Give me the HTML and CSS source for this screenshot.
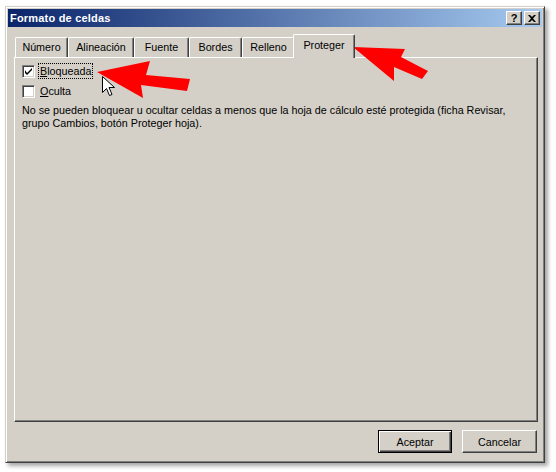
FILE: index.html
```html
<!DOCTYPE html>
<html lang="es">
<head>
<meta charset="utf-8">
<title>Formato de celdas</title>
<link rel="stylesheet" href="styles.css">
</head>
<body>
<div class="window">
  <div class="titlebar">
    <span class="title">Formato de celdas</span>
    <div class="tbtns">
      <span class="tbtn">?</span>
      <span class="tbtn">
        <svg width="8" height="7" viewBox="0 0 8 7"><path d="M0 0h2l2 2 2-2h2L5 3.5 8 7H6L4 5 2 7H0l3-3.5z" fill="#000"/></svg>
      </span>
    </div>
  </div>
  <div class="body">
    <div class="tabs">
      <div class="tab t1">Número</div>
      <div class="tab t2">Alineación</div>
      <div class="tab t3">Fuente</div>
      <div class="tab t4">Bordes</div>
      <div class="tab t5">Relleno</div>
      <div class="tab t6 sel">Proteger</div>
    </div>
    <div class="panel">
      <div class="check-row">
        <span class="cbox"><svg width="7" height="7" viewBox="0 0 7 7"><path d="M0 2v3l2 2 5-5V0L2 5z" fill="#000"/></svg></span>
        <span class="label focus"><u>B</u>loqueada</span>
      </div>
      <div class="check-row">
        <span class="cbox"></span>
        <span class="label"><u>O</u>culta</span>
      </div>
      <p class="note">No se pueden bloquear u ocultar celdas a menos que la hoja de cálculo esté protegida (ficha Revisar, grupo Cambios, botón Proteger hoja).</p>
    </div>
    <div class="buttons">
      <button class="btn default">Aceptar</button>
      <button class="btn">Cancelar</button>
    </div>
  </div>
</div>
<svg class="overlay" width="556" height="472" viewBox="0 0 556 472">
  <polygon points="97,72 150,61 146,75 190,79 187,91 141,85 143,98" fill="#f00"/>
  <polygon points="353,47 405,49 401,57 428,71 422,79 394,67 394,81" fill="#f00"/>
  <path d="M102.5 76.5v16l4-4 3 7 2.5-1-3-7h5.5z" fill="#fff" stroke="#000" stroke-width="1" stroke-linejoin="miter"/>
</svg>
</body>
</html>
```

FILE: styles.css
```css
html, body {
  margin: 0;
  padding: 0;
  background: #fff;
}
body {
  position: relative;
  width: 556px;
  height: 472px;
  overflow: hidden;
  font-family: "Liberation Sans", Arial, sans-serif;
  font-size: 10.75px;
  color: #000;
}
.window {
  box-sizing: border-box;
  margin: 6px 0 0 5px;
  width: 540px;
  height: 457px;
  background: #d4d0c8;
  border: 1px solid;
  border-color: #d4d0c8 #404040 #404040 #d4d0c8;
  padding: 2px;
  box-shadow: inset 1px 1px 0 #fff, inset -1px -1px 0 #808080, 3px 3px 4px rgba(0,0,0,0.35);
  display: flex;
  flex-direction: column;
}
.titlebar {
  height: 18px;
  background: linear-gradient(to right, #0a246a, #a6caf0);
  display: flex;
  align-items: center;
  justify-content: space-between;
  padding: 0 2px 0 2px;
}
.title {
  color: #fff;
  font-weight: bold;
  font-size: 11px;
  letter-spacing: 0.2px;
}
.tbtns {
  display: flex;
  gap: 2px;
}
.tbtn {
  box-sizing: border-box;
  width: 16px;
  height: 14px;
  background: #d4d0c8;
  border: 1px solid;
  border-color: #fff #404040 #404040 #fff;
  box-shadow: inset -1px -1px 0 #808080;
  display: flex;
  align-items: center;
  justify-content: center;
  font-weight: bold;
  font-size: 11px;
  line-height: 1;
}
.body {
  flex: 1;
  display: flex;
  flex-direction: column;
  padding: 6px 4px 0 6px;
}
.tabs {
  display: flex;
  align-items: flex-end;
  height: 24px;
  padding-left: 1px;
  position: relative;
  z-index: 1;
}
.tab {
  box-sizing: border-box;
  height: 20px;
  border: 1px solid;
  border-color: #fff #404040 transparent #fff;
  border-bottom: none;
  border-radius: 2px 2px 0 0;
  box-shadow: inset -1px 0 0 #808080;
  text-align: center;
  line-height: 19px;
}
.t1 { width: 53px; }
.t2 { width: 66px; }
.t3 { width: 55px; }
.t4 { width: 53px; }
.t5 { width: 53px; }
.tab.sel {
  width: 62px;
  height: 24px;
  margin-left: -2px;
  margin-bottom: -1px;
  background: #d4d0c8;
  line-height: 21px;
}
.panel {
  box-sizing: border-box;
  height: 365px;
  border: 1px solid;
  border-color: #fff #404040 #404040 #fff;
  box-shadow: inset -1px -1px 0 #808080;
  padding: 3px 8px 0 7px;
}
.check-row {
  display: flex;
  align-items: center;
  height: 20px;
}
.cbox {
  box-sizing: border-box;
  width: 13px;
  height: 13px;
  background: #fff;
  border: 1px solid;
  border-color: #808080 #fff #fff #808080;
  box-shadow: inset 1px 1px 0 #404040, inset -1px -1px 0 #d4d0c8;
  display: flex;
  align-items: center;
  justify-content: center;
  margin-right: 3px;
}
.label {
  padding: 1px 1px;
  border: 1px solid transparent;
}
.label.focus {
  border: 1px dotted #000;
}
.label u {
  text-decoration: underline;
}
.note {
  margin: 3px 0 0 0;
  line-height: 13px;
  width: 500px;
}
.buttons {
  display: flex;
  justify-content: flex-end;
  gap: 10px;
  padding-top: 8px;
  padding-right: 1px;
}
.btn {
  box-sizing: border-box;
  width: 75px;
  height: 23px;
  background: #d4d0c8;
  font-family: inherit;
  font-size: 10.75px;
  color: #000;
  border: 1px solid;
  border-color: #fff #404040 #404040 #fff;
  box-shadow: inset -1px -1px 0 #808080;
  padding: 0;
}
.btn.default {
  width: 74px;
  border: 1px solid #000;
  box-shadow: inset 1px 1px 0 #fff, inset -1px -1px 0 #404040, inset -2px -2px 0 #808080;
}
.overlay {
  position: absolute;
  left: 0;
  top: 0;
  pointer-events: none;
}
```
